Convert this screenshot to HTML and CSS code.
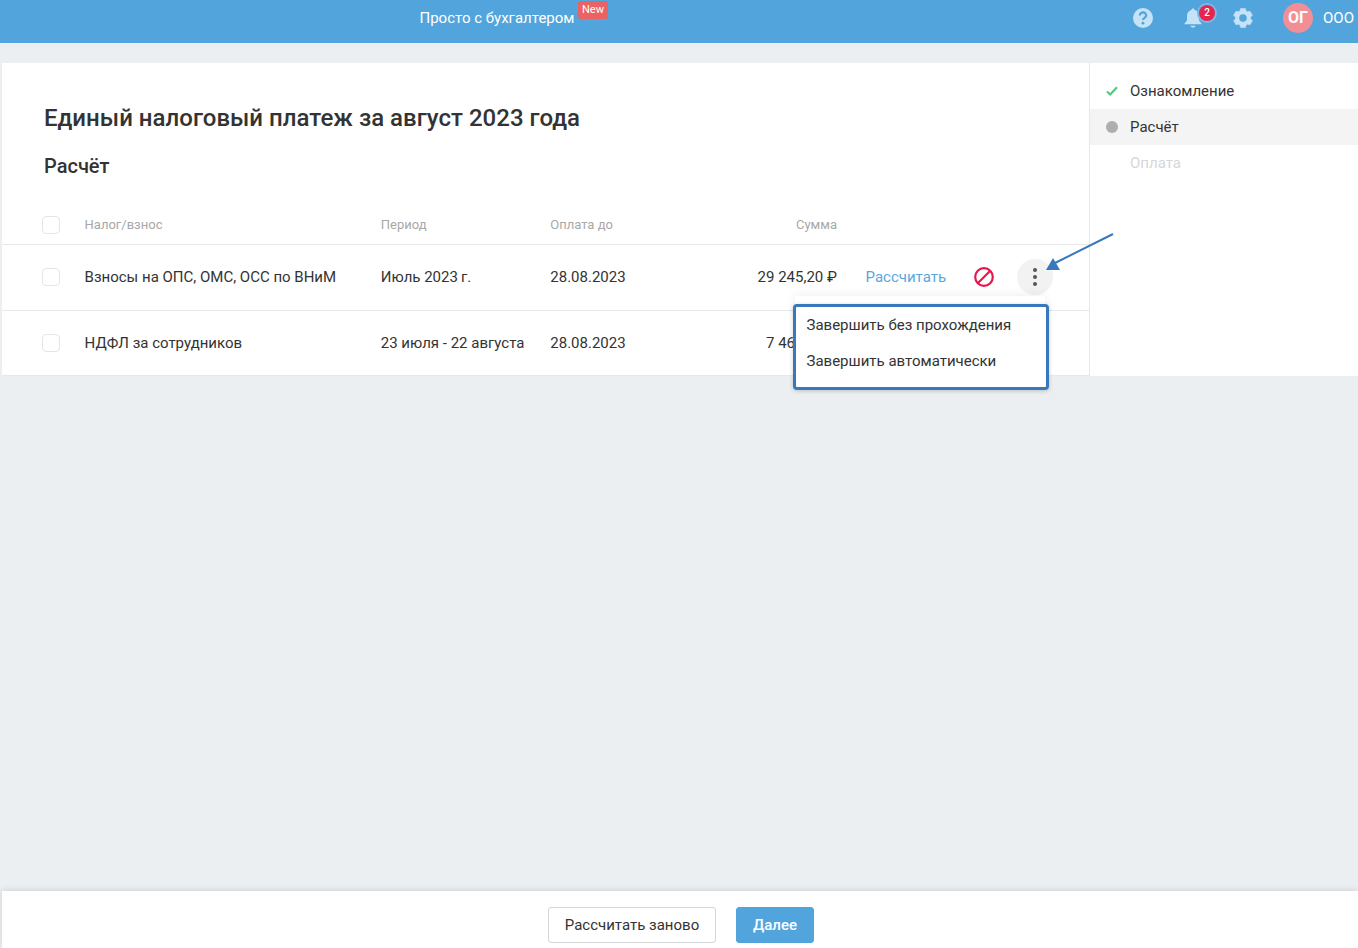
FILE: index.html
```html
<!DOCTYPE html>
<html lang="ru">
<head>
<meta charset="utf-8">
<title>Единый налоговый платеж</title>
<link rel="stylesheet" href="styles.css">
</head>
<body>
<header class="topbar">
  <div class="promo"><span class="promo-text">Просто с бухгалтером</span><span class="new-badge">New</span></div>
  <div class="top-icons">
    <svg class="ic ic-help" viewBox="0 0 20 20"><circle cx="10" cy="10" r="10" fill="#c5e2f7"/><path d="M6.8 7.6a3.2 3.2 0 0 1 6.4 0c0 2.2-3.2 2.300-3.200 4.400" fill="none" stroke="#52a5dc" stroke-width="2.200"/><circle cx="10" cy="15.200" r="1.400" fill="#52a5dc"/></svg>
    <div class="bell">
      <svg class="ic-bell" viewBox="0 0 18 20"><path d="M9 0.5c1 0 1.6.7 1.6 1.6C13.500 2.900 15 5.200 15 8v4.500l2.500 3v.8H.5v-.8l2.500-3V8c0-2.800 1.500-5.100 4.400-5.900C7.400 1.200 8 .5 9 .5z" fill="#c5e2f7"/><path d="M6.500 17.700h5c0 1-1.100 1.800-2.500 1.800s-2.500-.8-2.500-1.800z" fill="#c5e2f7"/></svg>
      <span class="count">2</span>
    </div>
    <svg class="ic ic-gear" viewBox="0 0 20 20"><path d="M6.910 3.060 7.580.6H12.420L13.090 3.060 14.470 3.850 17 3.250 19.400 7.240 17.560 9.210V10.790L19.400 12.760 17 16.750 14.470 16.150 13.090 16.940 12.420 19.400H7.580L6.910 16.940 5.530 16.150 3 16.750.6 12.760 2.440 10.790V9.210L.6 7.240 3 3.250 5.530 3.850z" fill="#c5e2f7" stroke="#c5e2f7" stroke-width=".6" stroke-linejoin="round"/><circle cx="10" cy="10" r="3.800" fill="#52a5dc"/></svg>
    <span class="avatar">ОГ</span>
    <span class="org">ООО</span>
  </div>
</header>

<main class="content">
  <section class="panel">
    <h1 class="title">Единый налоговый платеж за август 2023 года</h1>
    <h2 class="subtitle">Расчёт</h2>
    <div class="row row-head">
      <span class="check"></span>
      <span>Налог/взнос</span>
      <span>Период</span>
      <span>Оплата до</span>
      <span class="sum">Сумма</span>
    </div>
    <div class="row row-first">
      <span class="check"></span>
      <span>Взносы на ОПС, ОМС, ОСС по ВНиМ</span>
      <span>Июль 2023&#8201;г.</span>
      <span>28.08.2023</span>
      <span class="sum">29 245,20 ₽</span>
      <a class="calc">Рассчитать</a>
      <svg class="ban" viewBox="0 0 20 20"><circle cx="10" cy="10" r="8.800" fill="none" stroke="#e8174b" stroke-width="2.200"/><path d="M4 16 16 4" stroke="#e8174b" stroke-width="2.200"/></svg>
      <span class="kebab"><i></i><i></i><i></i></span>
    </div>
    <div class="row row-last">
      <span class="check"></span>
      <span>НДФЛ за сотрудников</span>
      <span>23 июля - 22 августа</span>
      <span>28.08.2023</span>
      <span class="sum">7 468,00 ₽</span>
    </div>
    <div class="menu-back"></div>
    <div class="menu">
      <div class="menu-item">Завершить без прохождения</div>
      <div class="menu-item">Завершить автоматически</div>
    </div>
  </section>
  <aside class="steps">
    <div class="step"><svg class="step-check" viewBox="0 0 12 10"><path d="M1 5.500 4.200 8.500 11 1.200" fill="none" stroke="#4fc97f" stroke-width="2.100"/></svg><span>Ознакомление</span></div>
    <div class="step step-active"><span class="dot"></span><span>Расчёт</span></div>
    <div class="step step-off"><span>Оплата</span></div>
  </aside>
</main>

<svg class="arrow" viewBox="0 0 80 50"><path d="M78 1 18 31" stroke="#3a78bd" stroke-width="2" fill="none"/><path d="M11 37 25 37 18 25z" fill="#3a78bd"/></svg>

<footer class="footer">
  <button class="btn">Рассчитать заново</button>
  <button class="btn btn-primary">Далее</button>
</footer>
</body>
</html>
```
FILE: styles.css
```css
* { box-sizing: border-box; }
html, body { height: 100%; }
body {
  margin: 0;
  height: 948px;
  overflow: hidden;
  background: #ebeff2;
  font: 15px/20px Roboto, "Liberation Sans", sans-serif;
  color: #333;
  display: flex;
  flex-direction: column;
  position: relative;
}
.topbar {
  height: 43px;
  flex: none;
  background: #52a5dc;
  display: flex;
  justify-content: space-between;
  color: #fff;
  padding: 0 4px 0 419.500px;
}
.promo { display: flex; align-items: flex-start; }
.promo-text { margin-top: 8px; font-size: 15px; }
.new-badge {
  margin: 1px 0 0 3.500px;
  width: 30px;
  height: 18px;
  background: #ea6262;
  border-radius: 3px;
  font-size: 11px;
  line-height: 17px;
  text-align: center;
}
.top-icons { display: flex; align-items: center; height: 36px; }
.ic { width: 20px; height: 20px; flex: none; }
.bell { position: relative; width: 20px; height: 20px; margin-left: 30px; }
.ic-bell { width: 18px; height: 20px; display: block; margin-left: 1px; }
.count {
  position: absolute;
  left: 16px;
  top: -3px;
  width: 16px;
  height: 16px;
  border-radius: 50%;
  background: #e4254f;
  box-shadow: 0 0 0 2px #7db8e3;
  font-size: 10px;
  line-height: 16px;
  font-weight: 500;
  text-align: center;
}
.ic-gear { margin-left: 30px; }
.avatar {
  margin-left: 30px;
  width: 30px;
  height: 30px;
  border-radius: 50%;
  background: #f28f96;
  text-align: center;
  font-weight: 700;
  font-size: 16px;
  line-height: 30px;
}
.org { margin-left: 10px; font-size: 15px; }

.content {
  display: flex;
  margin: 20px 0 0 2px;
  height: 313px;
  flex: none;
}
.panel {
  width: 1088px;
  flex: none;
  background: #fff;
  border-right: 1px solid #e6e8ea;
  position: relative;
  padding-top: 39px;
}
.title { margin: 0 0 0 42px; font-size: 24px; line-height: 32px; font-weight: 500; color: #333; letter-spacing: .02px; }
.subtitle { margin: 18px 0 0 42px; font-size: 20px; line-height: 28px; font-weight: 500; color: #333; }
.row {
  display: grid;
  grid-template-columns: 42.600px 296.200px 169.500px 149.700px 137px 109px 71px 36px;
  align-items: center;
  padding-left: 40px;
  height: 66px;
  border-bottom: 1px solid #e6e8ea;
}
.row-first { padding-bottom: 2px; }
.row-last { height: 65px; }
.row-head {
  height: 39px;
  margin-top: 26px;
  font-size: 13px;
  color: #a8a8a8;
  padding-bottom: 1px;
}
.check {
  width: 18px;
  height: 18px;
  border: 1px solid #e3e5e7;
  border-radius: 4px;
  background: #fff;
}
.sum { text-align: right; }
.calc { color: #5aa7de; margin-left: 28.600px; }
.ban { width: 20px; height: 20px; margin-left: 28px; grid-column: 7; }
.kebab {
  width: 36px;
  height: 36px;
  border-radius: 50%;
  background: #f2f2f2;
  display: flex;
  flex-direction: column;
  align-items: center;
  justify-content: center;
  gap: 3px;
}
.kebab i { width: 4px; height: 4px; border-radius: 50%; background: #555; }
.menu-back {
  position: absolute;
  left: 793px;
  top: 233px;
  width: 250px;
  height: 20px;
  background: #fff;
  box-shadow: 0 0 12px rgba(0,0,0,.08);
}
.menu {
  position: absolute;
  left: 791px;
  top: 241px;
  width: 256px;
  height: 86px;
  background: #fff;
  border: 3px solid #3a78bd;
  border-radius: 4px;
  padding: 7px 0 0 10.500px;
  box-shadow: 0 1px 4px rgba(0,0,0,.2);
}
.menu-item { height: 36px; line-height: 20px; padding-top: 1px; }

.steps { flex: 1; background: #fff; padding-top: 10px; }
.step { height: 36px; display: flex; align-items: center; padding-left: 40px; position: relative; }
.step-active { background: #f4f4f4; }
.step-off { color: #d5d7d9; }
.step-check { position: absolute; left: 16px; top: 13px; width: 12px; height: 10px; }
.dot { position: absolute; left: 16px; top: 12px; width: 12px; height: 12px; border-radius: 50%; background: #aeaeae; }

.arrow { position: absolute; left: 1035px; top: 233px; width: 80px; height: 50px; }

.footer {
  margin-top: auto;
  height: 57px;
  flex: none;
  margin-left: 2px;
  background: #fff;
  box-shadow: 0 -1px 6px rgba(0,0,0,.12);
  display: flex;
  justify-content: center;
  gap: 20px;
  padding-top: 16px;
  padding-left: 2px;
}
.btn {
  height: 36px;
  width: 168px;
  background: #fff;
  border: 1px solid #d5d7d9;
  border-radius: 3px;
  font: 15px Roboto, "Liberation Sans", sans-serif;
  color: #333;
  padding: 0;
}
.btn-primary { width: 78px; background: #52a5dc; border-color: #52a5dc; color: #fff; font-weight: 500; }
```
